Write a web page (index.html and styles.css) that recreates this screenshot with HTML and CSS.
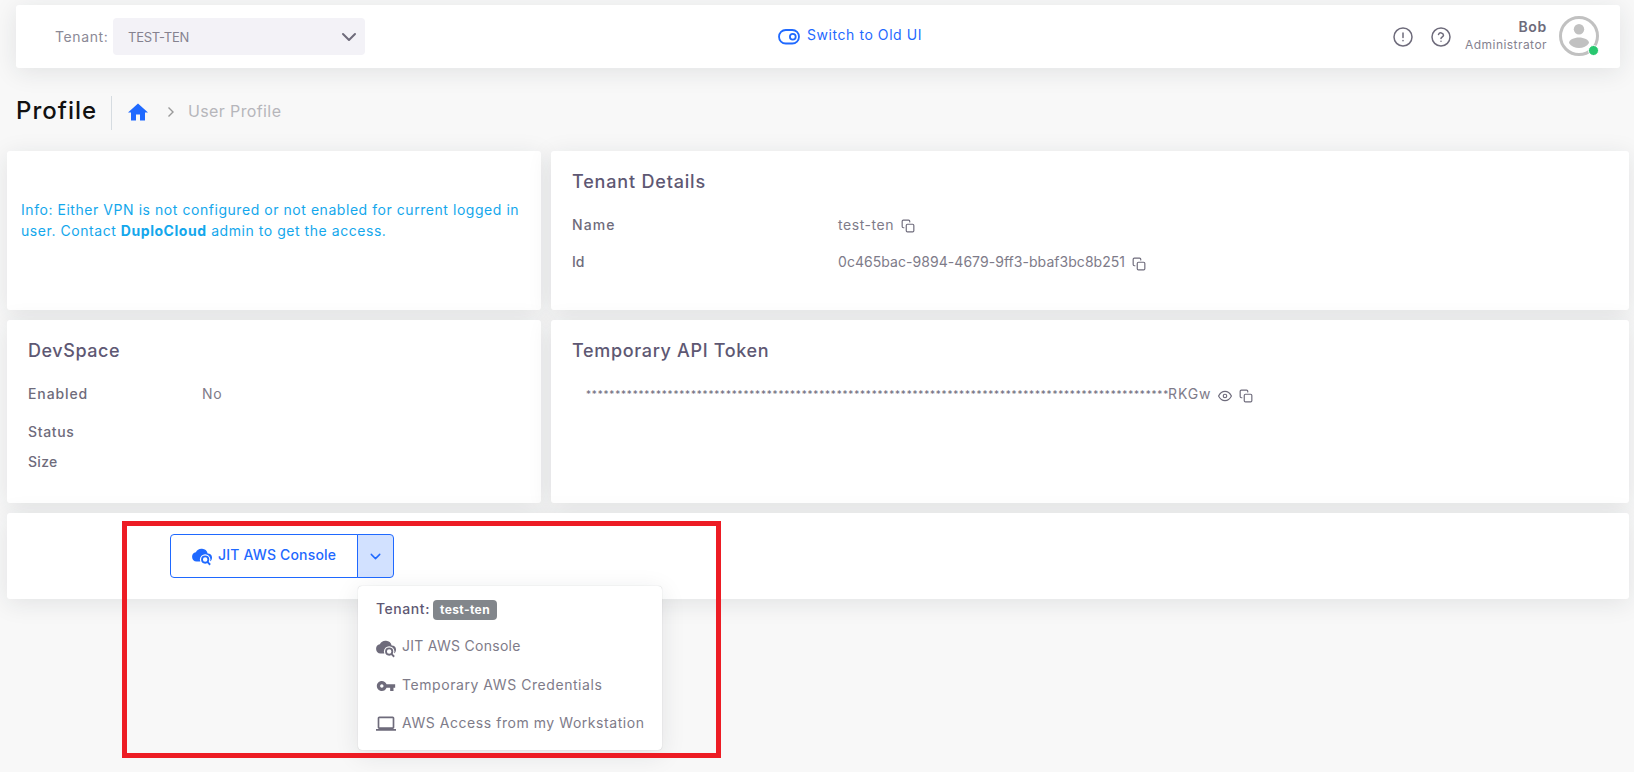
FILE: index.html
```html
<!DOCTYPE html>
<html lang="en">
<head>
<meta charset="utf-8">
<title>Profile</title>
<link rel="stylesheet" href="styles.css">
</head>
<body>
<svg class="defs" aria-hidden="true">
  <symbol id="copy" viewBox="0 0 24 24"><g fill="none" stroke="currentColor" stroke-width="2" stroke-linecap="round" stroke-linejoin="round"><rect x="9" y="9" width="13" height="13" rx="2"/><path d="M5 15H4a2 2 0 0 1-2-2V4a2 2 0 0 1 2-2h9a2 2 0 0 1 2 2v1"/></g></symbol>
  <symbol id="chevron" viewBox="0 0 24 24"><path d="M6 9l6 6 6-6" fill="none" stroke="currentColor" stroke-width="2" stroke-linecap="round" stroke-linejoin="round"/></symbol>
  <symbol id="cloud" viewBox="0 0 24 24"><path d="M5.500 18.500a5.500 5.500 0 0 1-.9-10.900 7.600 7.600 0 0 1 14.200 1.300A5 5 0 0 1 24 14c0 2.600-1.500 4.500-3.800 4.500z" fill="currentColor"/><circle cx="15.800" cy="16.300" r="6.300" fill="#fff"/><path d="M16 20h6l2 4h-6z" fill="#fff"/><g fill="none" stroke="currentColor" stroke-width="2.200"><circle cx="15.800" cy="16.300" r="3.800"/><path d="M18.500 19l3.300 3.500"/></g></symbol>
</svg>

<header class="topbar">
  <div class="tenant-pick">
    <span class="tenant-label">Tenant:</span>
    <div class="select"><span>TEST-TEN</span><svg class="select-arrow"><use href="#chevron"/></svg></div>
  </div>
  <a class="switch"><svg class="switch-icon" viewBox="0 0 22 16"><g fill="none" stroke="currentColor" stroke-width="1.800"><rect x="1" y="1" width="20" height="13.500" rx="6.750"/><circle cx="14.800" cy="7.700" r="2.900"/></g></svg><span>Switch to Old UI</span></a>
  <div class="user-area">
    <svg class="round-icon" viewBox="0 0 20 20"><g fill="none" stroke="currentColor" stroke-width="1.500" stroke-linecap="round"><circle cx="10" cy="10" r="9"/><path d="M10 6v4.400M10 13.600v.1"/></g></svg>
    <svg class="round-icon" viewBox="0 0 20 20"><g fill="none" stroke="currentColor" stroke-width="1.500" stroke-linecap="round"><circle cx="10" cy="10" r="9"/><path d="M7.500 7.500a2.600 2.600 0 0 1 5 .8c0 1.700-2.500 2-2.500 3.100M10 14.200v.1"/></g></svg>
    <div class="user-text"><b>Bob</b><span>Administrator</span></div>
    <div class="avatar">
      <svg viewBox="0 0 40 40"><circle cx="20" cy="20" r="18.500" fill="none" stroke="#c1c1c1" stroke-width="3"/><circle cx="20" cy="13.300" r="5.200" fill="#c1c1c1"/><path d="M10 27c0-3.200 5-5.500 10-5.500s10 2.300 10 5.500c-2 3.200-6 5-10 5s-8-1.800-10-5z" fill="#c1c1c1"/></svg>
      <i class="online"></i>
    </div>
  </div>
</header>

<nav class="crumbs">
  <h1>Profile</h1>
  <svg class="home" viewBox="0 0 20 18"><path d="M8 17.500v-6h4v6h5V9.500h3L10 .500 0 9.500h3v8z" fill="currentColor"/></svg>
  <svg class="crumb-arrow" viewBox="0 0 8 12"><path d="M1.500 1.500L6 6l-4.500 4.500" fill="none" stroke="currentColor" stroke-width="1.400"/></svg>
  <span>User Profile</span>
</nav>

<main class="grid">
  <section class="card vpn"><p>Info: Either VPN is not configured or not enabled for current logged in<br>user. Contact <b>DuploCloud</b> admin to get the access.</p></section>
  <section class="card tenant">
    <h2 class="t-tenant">Tenant Details</h2>
    <div class="row"><span class="key k-name">Name</span><span class="val v-ten">test-ten</span><svg class="copy"><use href="#copy"/></svg></div>
    <div class="row"><span class="key">Id</span><span class="val v-id">0c465bac-9894-4679-9ff3-bbaf3bc8b251</span><svg class="copy low"><use href="#copy"/></svg></div>
  </section>
  <section class="card dev">
    <h2 class="t-dev">DevSpace</h2>
    <div class="row"><span class="key k-enabled">Enabled</span><span class="val v-no">No</span></div>
    <div class="row"><span class="key k-status">Status</span></div>
    <div class="row tight"><span class="key k-size">Size</span></div>
  </section>
  <section class="card token">
    <h2 class="t-token">Temporary API Token</h2>
    <div class="row token-row"><span class="stars">****************************************************************************************************</span><span class="val v-tail">RKGw</span>
      <svg class="eye" viewBox="0 0 24 24"><g fill="none" stroke="currentColor" stroke-width="2"><path d="M1 12s4-8 11-8 11 8 11 8-4 8-11 8S1 12 1 12z"/><circle cx="12" cy="12" r="3"/></g></svg><svg class="copy"><use href="#copy"/></svg></div>
  </section>
  <section class="card actions">
    <div class="split">
      <button class="main-btn"><svg class="ico"><use href="#cloud"/></svg><span>JIT AWS Console</span></button>
      <button class="drop-btn"><svg class="drop-arrow"><use href="#chevron"/></svg></button>
      <div class="menu">
        <div class="menu-head"><span>Tenant:</span><em>test-ten</em></div>
        <div class="item"><svg class="ico"><use href="#cloud"/></svg><span class="m1">JIT AWS Console</span></div>
        <div class="item"><svg class="ico" viewBox="0 0 24 24"><path fill="currentColor" d="M12.650 10C11.830 7.670 9.610 6 7 6c-3.310 0-6 2.690-6 6s2.690 6 6 6c2.610 0 4.830-1.670 5.650-4H17v4h4v-4h2v-4H12.650zM7 14c-1.100 0-2-.9-2-2s.9-2 2-2 2 .9 2 2-.9 2-2 2z"/></svg><span class="m2">Temporary AWS Credentials</span></div>
        <div class="item"><svg class="ico" viewBox="0 0 24 24"><path fill="currentColor" d="M20 18c1.100 0 2-.9 2-2V5c0-1.100-.9-2-2-2H4c-1.100 0-2 .9-2 2v11c0 1.100.9 2 2 2H0v2h24v-2h-4zM4 5h16v11H4V5z"/></svg><span class="m3">AWS Access from my Workstation</span></div>
      </div>
    </div>
    <div class="highlight"></div>
  </section>
</main>
</body>
</html>
```
FILE: styles.css
```css
* { box-sizing: border-box; }
body { margin: 0; width: 1634px; height: 772px; overflow: hidden; padding: 5px 5px 0 7px; background: #f8f8f8; color: #6e6b7b; font: 400 14px/20px Inter, sans-serif; }
svg { display: block; flex: none; }
span, b, em, h1, h2 { white-space: nowrap; }
.defs { position: absolute; width: 0; height: 0; }
.topbar { display: flex; align-items: center; height: 63px; margin: 0 9px; background: #fff; border-radius: 3px; box-shadow: 0 4px 24px rgba(34,41,47,.1); }
.tenant-pick { display: flex; align-items: center; width: 762px; padding-left: 39px; }
.tenant-label { width: 58px; color: #8b8996; letter-spacing: .6px; }
.select { display: flex; align-items: center; justify-content: space-between; width: 252px; height: 37px; padding: 0 4px 0 15px; border-radius: 4px; background: #f3f2f7; font-size: 13px; letter-spacing: -.25px; color: #85828f; }
.select-arrow { width: 24px; height: 24px; color: #6e6b7b; }
.switch { display: flex; align-items: center; gap: 7px; color: #1f69ff; letter-spacing: .56px; }
.switch span { margin-top: -3px; }
.switch-icon { width: 22px; height: 16px; }
.user-area { display: flex; align-items: center; height: 61px; margin-bottom: 2px; margin-left: auto; padding-right: 21px; }
.round-icon { width: 20px; height: 20px; margin-right: 18px; margin-top: 2px; }
.user-text { display: flex; flex-direction: column; align-items: flex-end; width: 82px; margin-left: -4px; line-height: 17px; }
.user-text b { font-weight: 600; letter-spacing: .7px; }
.user-text span { font-size: 12px; letter-spacing: .45px; margin-top: 1px; color: #85828f; }
.avatar { position: relative; width: 40px; height: 40px; margin-left: 12px; }
.avatar svg { width: 40px; height: 40px; }
.online { position: absolute; right: 0; bottom: 0; width: 11px; height: 11px; border-radius: 50%; background: #28c76f; border: 1px solid #fff; }
.crumbs { display: flex; align-items: center; height: 34px; margin: 28px 0 21px 9px; color: #b6b6bb; font-size: 16px; letter-spacing: .38px; }
.crumbs span { margin-top: -4px; }
.crumbs h1 { margin: 0 16px 0 0; width: 96px; height: 34px; line-height: 29px; font-size: 24px; font-weight: 500; letter-spacing: 1px; color: #111; border-right: 1px solid #d6dce1; }
.home { width: 20px; height: 18px; color: #1f69ff; margin-top: -3px; }
.crumb-arrow { width: 8px; height: 12px; margin: -2px 13px 0 19px; color: #999; }
.grid { display: grid; grid-template-columns: 534px 1078px; grid-template-rows: 159px 183px 86px; gap: 10px; }
.card { padding: 20px 21px; background: #fff; border-radius: 3px; box-shadow: 0 4px 24px rgba(34,41,47,.1); }
.card h2 { margin: 0 0 22px; font-size: 18px; line-height: 22px; font-weight: 500; color: #5e5873; }
.card .t-tenant { letter-spacing: .82px; }
.card .t-dev { letter-spacing: .55px; }
.card .t-token { letter-spacing: .66px; }
.vpn { padding: 48px 14px; color: #14a7ec; }
.vpn p { margin: 0; line-height: 21px; white-space: nowrap; letter-spacing: .55px; }
.vpn b { font-weight: 700; letter-spacing: .55px; }
.row { display: flex; align-items: center; height: 20px; margin-bottom: 17px; }
.key { width: 266px; font-weight: 500; }
.k-name { letter-spacing: 1.1px; }
.k-enabled { letter-spacing: .9px; }
.k-status { letter-spacing: .65px; }
.k-size { letter-spacing: .3px; }
.val { color: #7e7b89; }
.v-ten { letter-spacing: .55px; }
.v-id { letter-spacing: .05px; }
.v-no { letter-spacing: .6px; }
.v-tail { letter-spacing: .9px; }
.dev .key { width: 174px; }
.dev .row { margin-bottom: 18px; }
.dev .row.tight { margin-top: -8px; }
.copy { width: 14px; height: 14px; margin-left: 7px; margin-top: 1px; }
.low { margin-top: 4px; }
.token-row { padding-left: 14px; }
.stars { width: 582px; font-size: 10px; letter-spacing: .82px; }
.eye { width: 14px; height: 14px; margin: 3px 0 0 7px; }
.token-row .copy { margin-top: 3px; }
.actions { position: relative; grid-column: 1 / 3; padding: 21px 163px; }
.split { position: relative; display: flex; width: 224px; height: 44px; color: #1f69ff; }
button { display: flex; align-items: center; padding: 0; border: 1px solid #1f69ff; background: #fff; color: inherit; font: inherit; }
.main-btn { width: 188px; padding-left: 21px; gap: 6px; border-radius: 4px 0 0 4px; font-weight: 500; letter-spacing: .18px; }
.main-btn span { margin-top: -3px; }
.drop-btn { width: 37px; margin-left: -1px; justify-content: center; border-radius: 0 4px 4px 0; background: #d2e1ff; }
.drop-arrow { width: 17px; height: 17px; margin: 1px 1px 0 0; }
.ico { width: 20px; height: 20px; }
.menu { position: absolute; z-index: 2; left: 188px; top: 52px; width: 304px; height: 164px; padding: 13px 18px; background: #fff; border-radius: 4px; color: #6e6b7b; box-shadow: 0 0 1px rgba(34,41,47,.3), 0 5px 25px rgba(34,41,47,.1); }
.menu-head { display: flex; align-items: center; height: 20px; margin-top: 1px; margin-bottom: 18px; font-weight: 500; color: #5e5873; }
.menu-head span { width: 57px; margin-top: -2px; letter-spacing: .55px; }
.menu-head em { display: flex; align-items: center; justify-content: center; width: 64px; height: 20px; border-radius: 4px; background: #82868b; color: #fff; font: 700 12px/12px Inter, sans-serif; letter-spacing: .4px; }
.item { display: flex; align-items: center; gap: 6px; height: 20px; margin-bottom: 18px; color: #7e7b89; }
.item svg { color: #6e6b7b; }
.item span { margin-top: -3px; }
.item .m1 { margin-top: -4px; }
.m1 { letter-spacing: .28px; }
.m2 { letter-spacing: .56px; }
.m3 { letter-spacing: .55px; }
.highlight { position: absolute; z-index: 3; left: 115px; top: 8px; width: 599px; height: 237px; border: 5px solid #ed1c24; }
```
